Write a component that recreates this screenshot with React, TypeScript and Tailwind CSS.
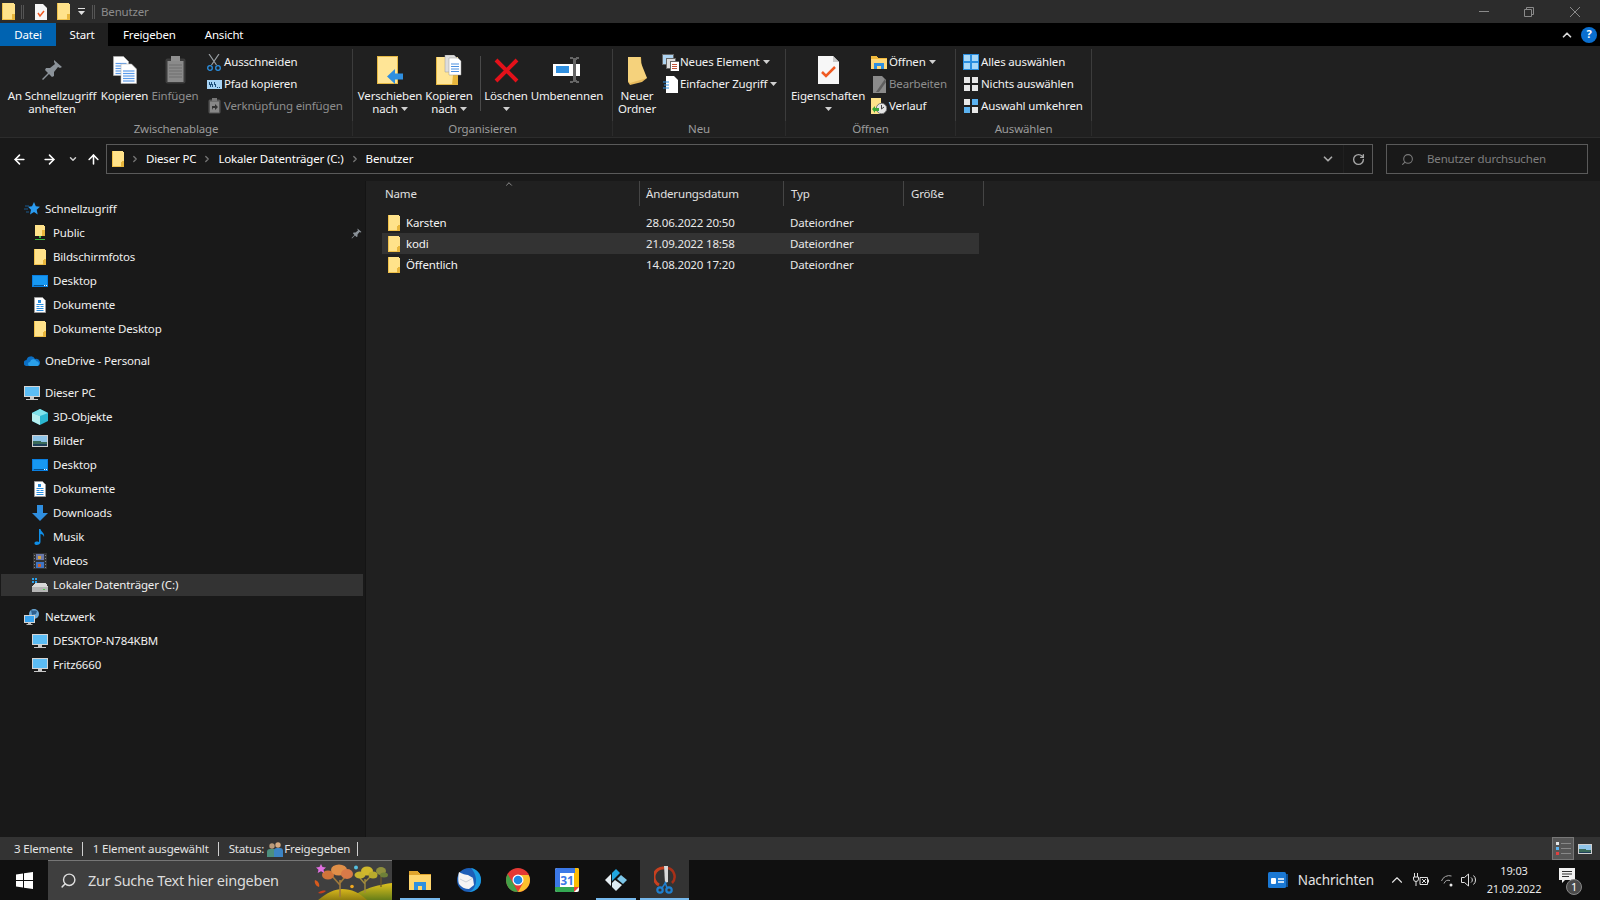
import type { ReactNode } from 'react';
import { ArrowLeft, ArrowRight, ArrowUp, ChevronDown, ChevronRight, ChevronUp, RotateCw, Search } from 'lucide-react';

function Folder({ className = '' }: { className?: string }) {
  return (
    <svg viewBox="0 0 12 16" className={className} shapeRendering="crispEdges">
      <path d="M0 0h10l2 1v15H0z" fill="#ffe28a" />
      <path d="M0 0h1v16H0zM0 15h12v1H0z" fill="#f0c14b" />
      <path d="M10 10h2v6h-3v-5z" fill="#e8b63c" />
    </svg>
  );
}

function Triangle() {
  return (
    <svg viewBox="0 0 7 4" className="h-[4px] w-[7px] shrink-0">
      <path d="M0 0h7L3.5 4z" fill="#d0d0d0" />
    </svg>
  );
}

function DocPage({ x, y, w, h }: { x: number; y: number; w: number; h: number }) {
  return (
    <g>
      <path d={`M${x} ${y}h${w - 5}l5 5v${h - 5}h-${w}z`} fill="#fff" stroke="#b5b5b5" strokeWidth="0.6" />
      {[7, 9.5, 12, 14.5, 17].map((d) => (
        <path key={d} d={`M${x + 2} ${y + d}h${w - 4}`} stroke="#5b9bea" strokeWidth="1.2" />
      ))}
    </g>
  );
}

function PinIcon({ className = 'h-[22px] w-[22px]' }: { className?: string }) {
  return (
    <svg viewBox="0 0 22 22" className={className}>
      <path d="M13 1l8 7-2 1-2-1-4 5 0 4-2 1-3-3-6 6-1-1 6-6-3-3 1-2h4l5-4-1-2z" fill="#8b9299" />
    </svg>
  );
}

function CopyIcon() {
  return (
    <svg viewBox="0 0 24 28" className="h-[28px] w-[24px]">
      <DocPage x={0.5} y={0.5} w={15} h={19} />
      <DocPage x={8} y={8} w={15.5} h={19.5} />
    </svg>
  );
}

function PasteIcon() {
  return (
    <svg viewBox="0 0 21 28" className="h-[28px] w-[21px]">
      <rect x="0.5" y="2.5" width="20" height="25" rx="2" fill="#3c3c3c" />
      <rect x="2.5" y="5" width="16" height="21" fill="#8a8a8a" />
      <path d="M4 9h13M4 12h13M4 15h13M4 18h13M4 21h13" stroke="#6f6f6f" />
      <rect x="6" y="0" width="9" height="5" fill="#8f8f8f" />
    </svg>
  );
}

function ScissorsIcon() {
  return (
    <svg viewBox="0 0 14 17" className="h-[17px] w-[14px]" fill="none">
      <path d="M2 0l7.5 11M12 0L4.500 11" stroke="#9aa0a5" strokeWidth="1.2" />
      <circle cx="3" cy="14" r="2.300" stroke="#2b8fe0" strokeWidth="1.300" />
      <circle cx="11" cy="14" r="2.300" stroke="#2b8fe0" strokeWidth="1.300" />
    </svg>
  );
}

function PathIcon() {
  return (
    <svg viewBox="0 0 15 9" className="h-[9px] w-[15px]" shapeRendering="crispEdges">
      <rect width="15" height="9" fill="#a8d4f5" />
      <path d="M2 2l2 5M4 2l2 5M7 2l2 5" stroke="#1d4f7a" />
      <path d="M10 7h1M12 7h1" stroke="#1d4f7a" />
    </svg>
  );
}

function ShortcutIcon() {
  return (
    <svg viewBox="0 0 13 16" className="h-[16px] w-[13px]">
      <rect x="0.500" y="1.500" width="12" height="14" rx="1.500" fill="#555" />
      <rect x="2" y="3.500" width="9" height="11" fill="#888" />
      <rect x="4" y="0" width="5" height="3" fill="#777" />
      <path d="M4 12V8h3V6l3 3-3 3v-2H5z" fill="#333" />
    </svg>
  );
}

function MoveToIcon() {
  return (
    <svg viewBox="0 0 26 28" className="h-[28px] w-[26px]">
      <path d="M0 0h21v28H0z" fill="#ffe596" />
      <path d="M0 0h21v1H1v26h20v1H0zM20 0h1v28h-1z" fill="#e6b944" />
      <path d="M10 20.500l8-7.500v4.500h8v6h-8V28z" fill="#2f8fe0" />
    </svg>
  );
}

function CopyToIcon() {
  return (
    <svg viewBox="0 0 26 30" className="h-[30px] w-[26px]">
      <path d="M0 2h22v28H0z" fill="#ffe596" />
      <path d="M0 2h1v28H0zM0 29h22v1H0z" fill="#e6b944" />
      <path d="M17 20h5v10h-6z" fill="#e8b63c" />
      <path d="M9 0h9l3 3v14H9z" fill="#ddd" stroke="#999" strokeWidth="0.500" />
      <path d="M13 3h9l3 3v14H13z" fill="#fff" stroke="#999" strokeWidth="0.500" />
      <path d="M15 9h8M15 11.500h8M15 14h8M15 16.500h8" stroke="#4b8fe0" />
    </svg>
  );
}

function DeleteIcon() {
  return (
    <svg viewBox="0 0 25 25" className="h-[25px] w-[25px]">
      <path d="M2 2l21 21M23 2L2 23" stroke="#e4111a" strokeWidth="4" />
    </svg>
  );
}

function RenameIcon() {
  return (
    <svg viewBox="0 0 28 28" className="h-[28px] w-[28px]" shapeRendering="crispEdges">
      <rect x="0" y="8" width="27" height="12" fill="#fff" />
      <rect x="3" y="10" width="13" height="7" fill="#2f8fe0" />
      <rect x="20" y="0" width="3" height="28" fill="#202020" />
      <path d="M17 1h3v1h3V1h3v2h-2l-1 1v20l1 1h2v2h-3v-1h-3v1h-3v-2h2l1-1V4l-1-1h-2z" fill="#666" />
    </svg>
  );
}

function BigFolderIcon() {
  return (
    <svg viewBox="0 0 19 29" className="h-[29px] w-[19px]">
      <path d="M0 1h13l1 18 5 3-5 4-12 3L0 26z" fill="#e6b95c" />
      <path d="M0 1h12l1 6 6 15-17 5-2-2z" fill="#f5d27c" />
    </svg>
  );
}

function NewItemIcon() {
  return (
    <svg viewBox="0 0 17 17" className="h-[17px] w-[17px]" shapeRendering="crispEdges">
      <rect x="0" y="0" width="11" height="10" fill="#aed4f2" stroke="#666" />
      <rect x="4" y="4" width="9" height="10" fill="#ddd" stroke="#666" />
      <rect x="8" y="7" width="9" height="10" fill="#fff" stroke="#666" />
      <path d="M10 10h5M10 12h5M10 14h5" stroke="#c2553a" />
    </svg>
  );
}

function EasyIcon() {
  return (
    <svg viewBox="0 0 15 17" className="h-[17px] w-[15px]">
      <path d="M3 0h8l4 4v13H3z" fill="#fff" />
      <path d="M0 6h6M1 9h5M0 12h6" stroke="#2f8fe0" />
    </svg>
  );
}

function PropsIcon() {
  return (
    <svg viewBox="0 0 21 28" className="h-[28px] w-[21px]">
      <path d="M0 0h15l6 6v22H0z" fill="#f7f7f7" />
      <path d="M15 0l6 6h-6z" fill="#c9c9c9" />
      <path d="M4 16l4 4 9-9" fill="none" stroke="#f05a22" strokeWidth="2.500" />
    </svg>
  );
}

function OpenIcon() {
  return (
    <svg viewBox="0 0 16 14" className="h-[14px] w-[16px]" shapeRendering="crispEdges">
      <path d="M0 1h6l1 2h9v11H0z" fill="#f0b93c" />
      <path d="M0 4h16v10H0z" fill="#ffd87a" />
      <path d="M3 8h10v6h-3v-3H6v3H3z" fill="#2f8fe0" />
    </svg>
  );
}

function EditIcon() {
  return (
    <svg viewBox="0 0 13 17" className="h-[17px] w-[13px]">
      <path d="M0 0h9l4 4v13H0z" fill="#8b8b8b" />
      <path d="M12 3L3 16h3l7-10z" fill="#5f5f5f" />
    </svg>
  );
}

function HistoryIcon() {
  return (
    <svg viewBox="0 0 16 16" className="h-[16px] w-[16px]">
      <path d="M0 0h10v16H0z" fill="#ffe28a" />
      <circle cx="10.500" cy="10.500" r="5.200" fill="#e5e5e5" stroke="#777" />
      <path d="M10.500 7v4l2.500-2" stroke="#444" fill="none" />
      <path d="M1 11l3-3v2h4v3H4v2z" fill="#3da639" />
    </svg>
  );
}

function SelectGrid({ cells, backing }: { cells: string[]; backing?: boolean }) {
  return (
    <svg viewBox="0 0 16 16" className="h-[16px] w-[16px]" shapeRendering="crispEdges">
      {backing && <rect width="16" height="16" fill="#2b8fe0" />}
      {cells.map((c, i) => (
        <rect key={i} x={i % 2 === 0 ? 1 : 9} y={i < 2 ? 1 : 9} width="6" height="6" fill={c} />
      ))}
    </svg>
  );
}

function Star() {
  return (
    <svg viewBox="0 0 16 14" className="h-[14px] w-[16px]">
      <path d="M10 0l1.800 4.300 4.200.4-3.300 3 1 4.800L10 10l-4 2.500 1-4.800-3-3 4-.4z" fill="#2a9bf0" />
      <path d="M1 4h4M0 7h4M2 10h3" stroke="#1a5a90" />
    </svg>
  );
}

function NetFolder() {
  return (
    <svg viewBox="0 0 12 16" className="h-[16px] w-[12px]" shapeRendering="crispEdges">
      <path d="M1 0h8l2 1v10H1z" fill="#ffe28a" />
      <path d="M8 5h3v6H8z" fill="#e8b63c" />
      <path d="M5 11h2v2H5zM1 14h10v1H1z" fill="#3fb83f" />
    </svg>
  );
}

function DesktopIcon() {
  return (
    <svg viewBox="0 0 16 12" className="h-[12px] w-[16px]" shapeRendering="crispEdges">
      <rect width="16" height="12" fill="#0a7fe0" />
      <rect x="1" y="1" width="14" height="9" fill="#1798f2" />
      <path d="M2 10h10v1H2z" fill="#06528f" />
      <path d="M12 10h1v1h-1zM14 10h1v1h-1z" fill="#fff" />
    </svg>
  );
}

function DocIcon() {
  return (
    <svg viewBox="0 0 12 16" className="h-[16px] w-[12px]">
      <path d="M0.500 0.500h8l3 3v12H0.500z" fill="#fff" stroke="#9a9a9a" />
      <path d="M4 3h3v3H4z" fill="#2b8fe0" />
      <path d="M2.500 7.500h7M2.500 9.500h3M6.500 9.500h3M2.500 11.500h7M2.500 13.500h7" stroke="#2b8fe0" />
    </svg>
  );
}

function CloudIcon() {
  return (
    <svg viewBox="0 0 16 10" className="h-[10px] w-[16px]">
      <path d="M3 10a3 3 0 0 1-.5-6A4.500 4.500 0 0 1 11 3a3.500 3.500 0 0 1 2.500 7z" fill="#0b6fc4" />
      <path d="M6 10a2 2 0 0 1 0-4 3.500 3.500 0 0 1 6.500-.8A2.500 2.500 0 0 1 13.500 10z" fill="#2aa0ea" />
    </svg>
  );
}

function PcIcon() {
  return (
    <svg viewBox="0 0 16 15" className="h-[15px] w-[16px]" shapeRendering="crispEdges">
      <rect x="0" y="0" width="16" height="11" fill="#d5d5d5" />
      <rect x="1" y="1" width="14" height="9" fill="#5cbdf5" />
      <path d="M6 11h4v2H6zM2 13h12v1H2z" fill="#c8c8c8" />
    </svg>
  );
}

function CubeIcon() {
  return (
    <svg viewBox="0 0 16 16" className="h-[16px] w-[16px]">
      <path d="M8 0l8 4v8l-8 4-8-4V4z" fill="#2bb7d1" />
      <path d="M8 7l8-3-8-4-8 4z" fill="#7fe2ea" />
      <path d="M0 4l8 3v9l-8-4z" fill="#b6f0f0" />
    </svg>
  );
}

function PictureIcon({ className = 'h-[12px] w-[16px]' }: { className?: string }) {
  return (
    <svg viewBox="0 0 16 12" className={className} shapeRendering="crispEdges">
      <rect width="16" height="12" fill="#cfcfcf" />
      <rect x="1" y="1" width="14" height="10" fill="#8fc4e8" />
      <path d="M1 6h6l3 1h5v4H1z" fill="#3b6b5a" />
      <path d="M1 9h14v2H1z" fill="#1f3f5a" />
    </svg>
  );
}

function DownloadIcon() {
  return (
    <svg viewBox="0 0 16 16" className="h-[16px] w-[16px]">
      <path d="M5 0h6v8h5l-8 8-8-8h5z" fill="#2f8fe0" />
    </svg>
  );
}

function MusicIcon() {
  return (
    <svg viewBox="0 0 12 16" className="h-[16px] w-[12px]">
      <path d="M5 0h1.500c.5 3 4.500 4 3.500 8-.5-2-2-3-3.500-3v8c0 2-2 3-4 3-3 0-2.500-3.500 0-3.500.7 0 1.500 0 2.500.5z" fill="#0f8fe8" />
    </svg>
  );
}

function FilmIcon() {
  return (
    <svg viewBox="0 0 14 16" className="h-[16px] w-[14px]" shapeRendering="crispEdges">
      <rect width="14" height="16" fill="#333" />
      <rect x="3" y="1" width="8" height="6" fill="#6a78a8" />
      <rect x="3" y="9" width="8" height="6" fill="#3f74c4" />
      <rect x="5" y="3" width="3" height="3" fill="#d8a03a" />
      <rect x="5" y="11" width="3" height="3" fill="#c8602a" />
      <path d="M1 2h1M1 5h1M1 8h1M1 11h1M1 14h1M12 2h1M12 5h1M12 8h1M12 11h1M12 14h1" stroke="#888" />
    </svg>
  );
}

function DriveIcon() {
  return (
    <svg viewBox="0 0 16 14" className="h-[14px] w-[16px]" shapeRendering="crispEdges">
      <path d="M3 5h11l2 4H0z" fill="#d8d8d8" />
      <rect x="0" y="9" width="16" height="5" fill="#b5b5b5" />
      <rect x="11" y="11" width="2" height="1" fill="#45d045" />
      <path d="M0 0h2v2H0zM3 0h2v2H3zM0 3h2v2H0zM3 3h2v2H3z" fill="#2aa0ea" />
    </svg>
  );
}

function NetworkIcon() {
  return (
    <svg viewBox="0 0 16 16" className="h-[16px] w-[16px]">
      <circle cx="10" cy="5" r="5" fill="#6aa8d8" />
      <path d="M7 1c2 1 4 0 6 1l-1 3-4 1z" fill="#2e5f8e" />
      <rect x="0" y="6" width="11" height="8" fill="#d5d5d5" />
      <rect x="1" y="7" width="9" height="6" fill="#38a3ef" />
      <path d="M4 14h3v1H4zM2.500 15h6v1h-6z" fill="#bbb" />
    </svg>
  );
}

function UsersIcon() {
  return (
    <svg viewBox="0 0 16 16" className="h-[16px] w-[16px]">
      <circle cx="5" cy="5" r="2.700" fill="#b89a7a" />
      <path d="M0 16v-5a3 3 0 0 1 3-3h4a3 3 0 0 1 3 3v5z" fill="#4d8f7d" />
      <circle cx="11" cy="4" r="2.700" fill="#d3aa82" />
      <path d="M7 16v-6a3 3 0 0 1 3-3h3a3 3 0 0 1 3 3v6z" fill="#3c84c4" />
    </svg>
  );
}

function WinLogo() {
  return (
    <svg viewBox="0 0 17 17" className="h-[17px] w-[17px]">
      <path d="M0 2.400l7-1v6.700H0zM8 1.300L17 0v8.100H8zM0 9h7v6.600l-7-1zM8 9h9v8l-9-1.300z" fill="#fff" />
    </svg>
  );
}

function AutumnArt() {
  return (
    <svg viewBox="0 0 80 40" className="h-[40px] w-[80px]">
      <defs>
        <linearGradient id="hillA" x1="0" y1="0" x2="0" y2="1">
          <stop offset="0" stopColor="#d8b81c" />
          <stop offset="1" stopColor="#8a7a10" />
        </linearGradient>
        <linearGradient id="hillB" x1="0" y1="0" x2="0" y2="1">
          <stop offset="0" stopColor="#e0c21e" />
          <stop offset="1" stopColor="#5f7a18" />
        </linearGradient>
      </defs>
      <path d="M42 34c8-4 16-9 38-12v18H42z" fill="url(#hillB)" />
      <path d="M5 40c9-8 18-12 25-12 10 0 18 4 26 12z" fill="url(#hillA)" />
      <path d="M28 36l0-17M28 24l-8-9M28 22l5-6" stroke="#a07a3c" strokeWidth="1.600" fill="none" />
      <ellipse cx="16" cy="14" rx="6" ry="4.500" fill="#d0743a" />
      <ellipse cx="27" cy="9" rx="8" ry="5.500" fill="#e08f48" />
      <ellipse cx="35" cy="13" rx="6" ry="5" fill="#d87a48" />
      <path d="M53 32V18M53 23l-5-6M53 21l6-6" stroke="#a08a3c" strokeWidth="1.400" fill="none" />
      <ellipse cx="48" cy="14" rx="5.500" ry="3.500" fill="#c9b52e" />
      <ellipse cx="55" cy="10" rx="6" ry="4.500" fill="#d0b82c" />
      <ellipse cx="61" cy="14" rx="4.500" ry="3.500" fill="#b8aa2c" />
      <path d="M69 26V13" stroke="#6f5a2c" strokeWidth="1.300" />
      <ellipse cx="69" cy="10" rx="5" ry="4" fill="#8f8f3c" />
      <ellipse cx="72" cy="14" rx="4" ry="2.500" fill="#6f8038" />
      <path d="M9 3l1.500 3L14 6.500l-2.500 2.300L12.300 12 9 10.300 5.700 12l.8-3.200L4 6.500 7.500 6z" fill="#e070e0" />
      <circle cx="44" cy="6.500" r="2" fill="#56c0e0" />
      <circle cx="40" cy="25.500" r="1.800" fill="#f0a820" />
      <path d="M3 19c3 1 5 4 4 7-3-1-5-4-4-7z" fill="#d85a1c" />
      <path d="M6 32c2-2 5-3 8-2-2 2-5 3-8 2z" fill="#c8401c" />
    </svg>
  );
}

function ExplorerIcon() {
  return (
    <svg viewBox="0 0 22 20" className="h-[20px] w-[22px]" shapeRendering="crispEdges">
      <path d="M0 1h9l2 3h11v16H0z" fill="#e0a42c" />
      <path d="M0 5h22v15H0z" fill="#ffd66e" />
      <path d="M5 12h12v8h-4v-4H9v4H5z" fill="#2f8fe0" />
    </svg>
  );
}

function MailBirdIcon() {
  return (
    <svg viewBox="0 0 24 24" className="h-[24px] w-[24px]">
      <circle cx="12" cy="12" r="12" fill="#1d5fb8" />
      <path d="M14 0c6 1 10 6 10 12 0 7-6 12-12 12 8-3 10-15 2-24z" fill="#1a9be0" />
      <path d="M2 4c3 2 7 3 9 3l5 3 1 7-5 4c-4 0-8-2-10-5-1-2-1-8 0-12z" fill="#f4f4f4" />
      <path d="M3 11l6 3 7-4" fill="none" stroke="#c0c8d0" strokeWidth="0.800" />
    </svg>
  );
}

function ChromeIcon() {
  return (
    <svg viewBox="0 0 24 24" className="h-[24px] w-[24px]">
      <circle cx="12" cy="12" r="12" fill="#e53935" />
      <path d="M1.600 6L7 15l5 9c-8 0-12-6-12-12 0-2 .6-4.200 1.600-6z" fill="#43a047" />
      <path d="M12 7h10.600c.9 1.500 1.400 3.200 1.400 5 0 6-5 12-12 12l5-9z" fill="#fbc02d" />
      <circle cx="12" cy="12" r="5.500" fill="#fff" />
      <circle cx="12" cy="12" r="4.300" fill="#1e88e5" />
    </svg>
  );
}

function CalendarIcon() {
  return (
    <svg viewBox="0 0 24 24" className="h-[24px] w-[24px]">
      <rect width="24" height="24" rx="2" fill="#fff" />
      <path d="M2 0h18v5H0V2a2 2 0 0 1 2-2zM0 5h5v14H0z" fill="#3b78e7" />
      <path d="M20 0h2a2 2 0 0 1 2 2v17h-5V5h1z" fill="#fbbc04" />
      <path d="M0 19h19v5H2a2 2 0 0 1-2-2z" fill="#34a853" />
      <path d="M19 19h5l-5 5z" fill="#ea4335" />
      <text x="12" y="16.500" textAnchor="middle" fontSize="12" fontWeight="700" fill="#3b78e7">31</text>
    </svg>
  );
}

function KodiIcon() {
  return (
    <svg viewBox="0 0 24 24" className="h-[24px] w-[24px]">
      <path d="M1 12l6-6v12z" fill="#e6eef2" />
      <path d="M8 5l4-4 4 4-8 8z" fill="#1fa6e0" />
      <path d="M13 11l4-4 6 5-4 4z" fill="#7cc6e8" />
      <path d="M8 15l3-3 7 5-6 6-4-4z" fill="#dceaf0" />
    </svg>
  );
}

function SnipIcon() {
  return (
    <svg viewBox="0 0 22 30" className="h-[30px] w-[22px]" fill="none">
      <path d="M10 3A9 9 0 0 0 5 20" stroke="#c8401f" strokeWidth="3" />
      <path d="M14 3a9 9 0 0 1 4 15" stroke="#a83018" strokeWidth="2.500" />
      <path d="M10 1l1 17 3-1 0-16z" fill="#d8d8d8" />
      <circle cx="6" cy="25" r="2.700" stroke="#1f80d0" strokeWidth="2.200" />
      <circle cx="15" cy="25" r="2.700" stroke="#1f80d0" strokeWidth="2.200" />
      <path d="M8 23l4-6M13 23l-2-6" stroke="#1f80d0" strokeWidth="1.500" />
    </svg>
  );
}

function LargeButton({ width, icon, lines, caret, disabled }: { width: string; icon: ReactNode; lines: string[]; caret?: 'inline' | 'below'; disabled?: boolean }) {
  return (
    <div className={`flex shrink-0 flex-col items-center text-center leading-[13px] ${width} ${disabled ? 'text-[#8e8e8e]' : 'text-[#f2f2f2]'}`}>
      <div className="flex h-[38px] items-center justify-center">{icon}</div>
      {lines.map((line, i) => (
        <div key={line} className="flex items-center gap-[3px] whitespace-nowrap">
          {line}
          {caret === 'inline' && i === lines.length - 1 && <Triangle />}
        </div>
      ))}
      {caret === 'below' && (
        <div className="flex h-[13px] items-center">
          <Triangle />
        </div>
      )}
    </div>
  );
}

function SmallButton({ icon, label, caret, disabled }: { icon: ReactNode; label: string; caret?: boolean; disabled?: boolean }) {
  return (
    <div className={`flex h-[22px] items-center whitespace-nowrap ${disabled ? 'text-[#8e8e8e]' : 'text-[#f2f2f2]'}`}>
      <div className="flex w-[18px] justify-center">{icon}</div>
      <span className="ml-[1px]">{label}</span>
      {caret && <span className="ml-[3px]"><Triangle /></span>}
    </div>
  );
}

function RibbonGroup({ width, label, children }: { width: string; label: string; children: ReactNode }) {
  return (
    <div className={`flex shrink-0 flex-col pt-[3px] ${width}`}>
      <div className="flex h-[72px] border-r border-[#3c3c3c] pt-[2px]">{children}</div>
      <div className="flex h-[15px] items-center justify-center border-r border-[#2b2b2b] text-[#9b9b9b]">{label}</div>
    </div>
  );
}

function TreeRow({ icon, label, child, selected, pinned, gap }: { icon: ReactNode; label: string; child?: boolean; selected?: boolean; pinned?: boolean; gap?: boolean }) {
  return (
    <div className={`flex h-6 items-center py-px ${gap ? 'mt-2' : ''}`}>
      <div className={`ml-px flex h-[22px] w-[362px] items-center ${child ? 'pl-[31px]' : 'pl-[23px]'} ${selected ? 'bg-[#333333]' : ''}`}>
        <div className="flex w-4 justify-center">{icon}</div>
        <span className="ml-[5px] whitespace-nowrap text-[#f0f0f0]">{label}</span>
        {pinned && (
          <span className="ml-auto mr-px">
            <PinIcon className="h-[11px] w-[11px]" />
          </span>
        )}
      </div>
    </div>
  );
}

function FileRow({ name, date, selected }: { name: string; date: string; selected?: boolean }) {
  return (
    <div className={`ml-4 grid h-[21px] w-[597px] grid-cols-[264px_144px_189px] items-center text-[#e8e8e8] ${selected ? 'bg-[#333333]' : ''}`}>
      <div className="flex items-center pl-[6px]">
        <Folder className="h-[16px] w-[12px]" />
        <span className="ml-[6px] text-[#f4f4f4]">{name}</span>
      </div>
      <div>{date}</div>
      <div>Dateiordner</div>
    </div>
  );
}

function TaskIcon({ children, running, active }: { children: ReactNode; running?: boolean; active?: boolean }) {
  return (
    <div className={`flex h-10 w-[49px] flex-col items-center ${active ? 'bg-[#333333]' : ''}`}>
      <div className="flex min-h-0 flex-1 items-center justify-center pt-[2px]">{children}</div>
      <div className={`h-[2px] ${active ? 'w-full' : 'w-10'} ${running ? 'bg-[#76b9ed]' : ''}`} />
    </div>
  );
}

export default function App() {
  return (
    <div className="flex h-[900px] w-[1600px] flex-col overflow-hidden bg-[#191919] font-['Noto_Sans',sans-serif] text-[11.5px] tracking-[-0.16px] text-white">
      {/* title bar */}
      <div className="flex h-[23px] items-center bg-[#2c2c2c]">
        <Folder className="ml-[2px] h-[17px] w-[13px]" />
        <div className="ml-[6px] h-[14px] w-[3px] border-x border-[#555]" />
        <svg viewBox="0 0 12 16" className="ml-[11px] h-[16px] w-[12px]">
          <path d="M0 0h8l4 4v12H0z" fill="#f7f7f7" />
          <path d="M3 9l2 3 4-5" fill="none" stroke="#f05a22" strokeWidth="1.500" />
        </svg>
        <Folder className="ml-[10px] h-[17px] w-[13px]" />
        <svg viewBox="0 0 7 7" className="ml-[8px] h-[7px] w-[7px]">
          <path d="M0 0h7v1H0zM0 3h7L3.500 7z" fill="#e0e0e0" />
        </svg>
        <div className="ml-[7px] h-[14px] w-[3px] border-x border-[#555]" />
        <span className="ml-[6px] text-[#8c8c8c]">Benutzer</span>
        <div className="ml-auto flex items-center text-[#8a8a8a]">
          <div className="h-px w-[10px] bg-[#8a8a8a]" />
          <svg viewBox="0 0 10 10" className="ml-[35px] h-[10px] w-[10px]" fill="none" stroke="#8a8a8a">
            <path d="M0.500 2.500h7v7h-7zM2.500 2.500v-2h7v7h-2" />
          </svg>
          <svg viewBox="0 0 10 10" className="ml-[36px] mr-[20px] h-[10px] w-[10px]" fill="none" stroke="#8a8a8a">
            <path d="M0 0l10 10M10 0L0 10" />
          </svg>
        </div>
      </div>

      {/* tabs */}
      <div className="flex h-[23px] items-center bg-black">
        <div className="flex h-full w-[56px] items-center justify-center bg-[#0063b1]">Datei</div>
        <div className="flex h-full w-[52px] items-center justify-center bg-[#202020]">Start</div>
        <span className="ml-[15px]">Freigeben</span>
        <span className="ml-[29px]">Ansicht</span>
        <ChevronUp className="ml-auto h-[14px] w-[14px]" strokeWidth={3} color="#d8d8d8" />
        <div className="ml-[7px] mr-[3px] flex h-4 w-4 items-center justify-center rounded-full bg-[#0a6fd0] text-[11px] font-bold">?</div>
      </div>

      {/* ribbon */}
      <div className="flex h-[92px] border-b border-[#2c2c2c] bg-[#202020]">
        <RibbonGroup width="w-[353px]" label="Zwischenablage">
          <LargeButton width="w-[104px]" icon={<PinIcon />} lines={['An Schnellzugriff', 'anheften']} />
          <LargeButton width="w-[41px]" icon={<CopyIcon />} lines={['Kopieren']} />
          <LargeButton width="w-[60px]" icon={<PasteIcon />} lines={['Einfügen']} disabled />
          <div className="flex flex-col">
            <SmallButton icon={<ScissorsIcon />} label="Ausschneiden" />
            <SmallButton icon={<PathIcon />} label="Pfad kopieren" />
            <SmallButton icon={<ShortcutIcon />} label="Verknüpfung einfügen" disabled />
          </div>
        </RibbonGroup>
        <RibbonGroup width="w-[260px]" label="Organisieren">
          <div className="w-[4px] shrink-0" />
          <LargeButton width="w-[66px]" icon={<MoveToIcon />} lines={['Verschieben', 'nach']} caret="inline" />
          <LargeButton width="w-[52px]" icon={<CopyToIcon />} lines={['Kopieren', 'nach']} caret="inline" />
          <div className="ml-[5px] mt-[5px] h-[55px] w-px shrink-0 bg-[#4a4a4a]" />
          <LargeButton width="w-[50px]" icon={<DeleteIcon />} lines={['Löschen']} caret="below" />
          <LargeButton width="w-[72px]" icon={<RenameIcon />} lines={['Umbenennen']} />
        </RibbonGroup>
        <RibbonGroup width="w-[173px]" label="Neu">
          <LargeButton width="w-[48px]" icon={<BigFolderIcon />} lines={['Neuer', 'Ordner']} />
          <div className="flex flex-col">
            <SmallButton icon={<NewItemIcon />} label="Neues Element" caret />
            <SmallButton icon={<EasyIcon />} label="Einfacher Zugriff" caret />
          </div>
        </RibbonGroup>
        <RibbonGroup width="w-[170px]" label="Öffnen">
          <LargeButton width="w-[84px]" icon={<PropsIcon />} lines={['Eigenschaften']} caret="below" />
          <div className="flex flex-col">
            <SmallButton icon={<OpenIcon />} label="Öffnen" caret />
            <SmallButton icon={<EditIcon />} label="Bearbeiten" disabled />
            <SmallButton icon={<HistoryIcon />} label="Verlauf" />
          </div>
        </RibbonGroup>
        <RibbonGroup width="w-[136px]" label="Auswählen">
          <div className="flex flex-col pl-[6px]">
            <SmallButton icon={<SelectGrid backing cells={['#a8d8f8', '#a8d8f8', '#a8d8f8', '#a8d8f8']} />} label="Alles auswählen" />
            <SmallButton icon={<SelectGrid cells={['#e8e8e8', '#e8e8e8', '#e8e8e8', '#e8e8e8']} />} label="Nichts auswählen" />
            <SmallButton icon={<SelectGrid cells={['#e8e8e8', '#5bb2f0', '#5bb2f0', '#e8e8e8']} />} label="Auswahl umkehren" />
          </div>
        </RibbonGroup>
      </div>

      {/* address bar */}
      <div className="flex h-[43px] items-center pb-px">
        <ArrowLeft className="ml-[12px] h-[15px] w-[15px]" strokeWidth={2.5} />
        <ArrowRight className="ml-[15px] h-[15px] w-[15px]" strokeWidth={2.5} />
        <ChevronDown className="ml-[11px] h-[10px] w-[10px]" strokeWidth={3.5} color="#cfcfcf" />
        <ArrowUp className="ml-[8px] h-[15px] w-[15px]" strokeWidth={2.5} />
        <div className="ml-[5px] flex h-[30px] w-[1267px] items-center border border-[#5a5a5a]">
          <Folder className="ml-[5px] h-[16px] w-[12px]" />
          <ChevronRight className="ml-[6px] h-[10px] w-[10px]" strokeWidth={3} color="#777" />
          <span className="ml-[6px]">Dieser PC</span>
          <ChevronRight className="ml-[6px] h-[10px] w-[10px]" strokeWidth={3} color="#777" />
          <span className="ml-[6px]">Lokaler Datenträger (C:)</span>
          <ChevronRight className="ml-[6px] h-[10px] w-[10px]" strokeWidth={3} color="#777" />
          <span className="ml-[6px]">Benutzer</span>
          <ChevronDown className="ml-auto h-[14px] w-[14px]" strokeWidth={3} color="#a8a8a8" />
          <div className="ml-[8px] flex h-full w-[29px] items-center justify-center border-l border-[#202020]">
            <RotateCw className="h-[13px] w-[13px]" strokeWidth={2.5} color="#a8a8a8" />
          </div>
        </div>
        <div className="ml-[13px] flex h-[30px] w-[202px] items-center border border-[#5a5a5a]">
          <Search className="ml-[14px] h-[13px] w-[13px] -scale-x-100" color="#7a7a7a" />
          <span className="ml-[13px] text-[#7e7e7e]">Benutzer durchsuchen</span>
        </div>
      </div>

      {/* main */}
      <div className="flex min-h-0 flex-1">
        <div className="w-[366px] shrink-0 border-r border-[#141414] bg-[#191919] pt-4">
          <TreeRow icon={<Star />} label="Schnellzugriff" />
          <TreeRow child icon={<NetFolder />} label="Public" pinned />
          <TreeRow child icon={<Folder className="h-[16px] w-[12px]" />} label="Bildschirmfotos" />
          <TreeRow child icon={<DesktopIcon />} label="Desktop" />
          <TreeRow child icon={<DocIcon />} label="Dokumente" />
          <TreeRow child icon={<Folder className="h-[16px] w-[12px]" />} label="Dokumente Desktop" />
          <TreeRow gap icon={<CloudIcon />} label="OneDrive - Personal" />
          <TreeRow gap icon={<PcIcon />} label="Dieser PC" />
          <TreeRow child icon={<CubeIcon />} label="3D-Objekte" />
          <TreeRow child icon={<PictureIcon />} label="Bilder" />
          <TreeRow child icon={<DesktopIcon />} label="Desktop" />
          <TreeRow child icon={<DocIcon />} label="Dokumente" />
          <TreeRow child icon={<DownloadIcon />} label="Downloads" />
          <TreeRow child icon={<MusicIcon />} label="Musik" />
          <TreeRow child icon={<FilmIcon />} label="Videos" />
          <TreeRow child selected icon={<DriveIcon />} label="Lokaler Datenträger (C:)" />
          <TreeRow gap icon={<NetworkIcon />} label="Netzwerk" />
          <TreeRow child icon={<PcIcon />} label="DESKTOP-N784KBM" />
          <TreeRow child icon={<PcIcon />} label="Fritz6660" />
        </div>
        <div className="min-w-0 flex-1 bg-[#202020]">
          <div className="relative grid h-[25px] w-[618px] grid-cols-[274px_144px_120px_80px] items-stretch text-[#e0e0e0]">
            <ChevronUp className="absolute left-[138px] top-[-2px] h-[10px] w-[10px]" color="#a0a0a0" />
            <div className="flex items-center border-r border-[#454545] pl-[19px]">Name</div>
            <div className="flex items-center border-r border-[#454545] pl-[6px]">Änderungsdatum</div>
            <div className="flex items-center border-r border-[#454545] pl-[7px]">Typ</div>
            <div className="flex items-center border-r border-[#454545] pl-[7px]">Größe</div>
          </div>
          <div className="pt-[6px]">
            <FileRow name="Karsten" date="28.06.2022 20:50" />
            <FileRow name="kodi" date="21.09.2022 18:58" selected />
            <FileRow name="Öffentlich" date="14.08.2020 17:20" />
          </div>
        </div>
      </div>

      {/* status bar */}
      <div className="flex h-[23px] items-center bg-[#333333] text-[#e4e4e4]">
        <span className="ml-[14px]">3 Elemente</span>
        <div className="ml-[9px] h-[14px] w-px bg-[#d0d0d0]" />
        <span className="ml-[10px]">1 Element ausgewählt</span>
        <div className="ml-[9px] h-[14px] w-px bg-[#d0d0d0]" />
        <span className="ml-[10px]">Status:</span>
        <span className="ml-[3px]"><UsersIcon /></span>
        <span className="ml-[1px]">Freigegeben</span>
        <div className="ml-[7px] h-[14px] w-px bg-[#d0d0d0]" />
        <div className="ml-auto flex h-full w-[22px] flex-col items-center justify-center gap-[2px] border border-[#777] bg-[#565656]">
          <div className="flex items-center gap-[2px]"><div className="h-[3px] w-[3px] bg-[#e8e8e8]" /><div className="h-px w-[10px] bg-[#888]" /></div>
          <div className="flex items-center gap-[2px]"><div className="h-[3px] w-[3px] bg-[#5bb2f0]" /><div className="h-px w-[10px] bg-[#888]" /></div>
          <div className="flex items-center gap-[2px]"><div className="h-[3px] w-[3px] bg-[#e04040]" /><div className="h-px w-[10px] bg-[#888]" /></div>
        </div>
        <div className="ml-[4px] mr-[8px]"><PictureIcon className="h-[10px] w-[14px]" /></div>
      </div>

      {/* taskbar */}
      <div className="flex h-10 items-center bg-[#101010]">
        <div className="flex w-12 justify-center"><WinLogo /></div>
        <div className="flex h-10 w-[344px] items-center overflow-hidden border-t border-[#777] bg-[#3f3f3f]">
          <Search className="ml-[12px] h-[17px] w-[17px] -scale-x-100" color="#e0e0e0" />
          <span className="ml-[11px] whitespace-nowrap text-[14.5px] tracking-[-0.26px] text-[#dcdcdc]">Zur Suche Text hier eingeben</span>
          <div className="ml-auto"><AutumnArt /></div>
        </div>
        <div className="ml-[3px] flex">
          <TaskIcon running><ExplorerIcon /></TaskIcon>
          <TaskIcon><MailBirdIcon /></TaskIcon>
          <TaskIcon><ChromeIcon /></TaskIcon>
          <TaskIcon><CalendarIcon /></TaskIcon>
          <TaskIcon running><KodiIcon /></TaskIcon>
          <TaskIcon running active><SnipIcon /></TaskIcon>
        </div>
        <div className="ml-auto flex items-center">
          <svg viewBox="0 0 20 16" className="h-[16px] w-[20px]">
            <rect width="18" height="16" rx="1.500" fill="#1a78d4" />
            <path d="M18 2h2v13h-2z" fill="#0d4f94" />
            <rect x="3" y="6" width="5" height="6" rx="1" fill="#fff" />
            <path d="M10 7h6M10 10h6" stroke="#fff" strokeWidth="1.500" />
          </svg>
          <span className="ml-[10px] text-[13.5px] tracking-[-0.1px] text-[#e4e4e4]">Nachrichten</span>
          <ChevronUp className="ml-[14px] h-[18px] w-[18px]" strokeWidth={1.5} color="#e4e4e4" />
          <svg viewBox="0 0 16 14" className="ml-[7px] h-[14px] w-[16px]" fill="none" stroke="#e0e0e0">
            <path d="M1.500 0v4M4.500 0v4M0.500 4h5v2a2.500 2.500 0 0 1-5 0zM3 8.500V13M7 4.500h7.500v7H7zM15.500 6.500v3M9 6l4 4M13 6l-4 4" />
          </svg>
          <svg viewBox="0 0 14 14" className="ml-[12px] h-[14px] w-[14px]" fill="none" stroke="#a8a8a8">
            <path d="M0.500 8a8 8 0 0 1 10-5M3 10.500a5 5 0 0 1 6-3" />
            <circle cx="10" cy="12" r="1.500" fill="#e8e8e8" stroke="none" />
          </svg>
          <svg viewBox="0 0 16 14" className="ml-[6px] h-[14px] w-[16px]" fill="none" stroke="#e0e0e0">
            <path d="M0.500 4.500h3l4-3.500v12l-4-3.500h-3zM10 4.500a3 3 0 0 1 0 5M12.500 2.500a6 6 0 0 1 0 9" />
          </svg>
          <div className="ml-[0px] flex w-[74px] flex-col items-center text-[11px] leading-[18px] text-[#e8e8e8]">
            <span>19:03</span>
            <span>21.09.2022</span>
          </div>
          <div className="relative ml-[8px] mr-[17px] h-[24px] w-[24px]">
            <svg viewBox="0 0 16 16" className="h-[16px] w-[16px]">
              <path d="M0 0h16v12H6l-3 3v-3H0z" fill="#f2f2f2" />
              <path d="M3 3.500h10M3 6h10M3 8.500h7" stroke="#333" />
            </svg>
            <div className="absolute bottom-[-3px] right-[1px] flex h-[16px] w-[16px] items-center justify-center rounded-full border border-[#888] bg-[#4a4a4a] text-[11px] text-white">1</div>
          </div>
        </div>
      </div>
    </div>
  );
}
